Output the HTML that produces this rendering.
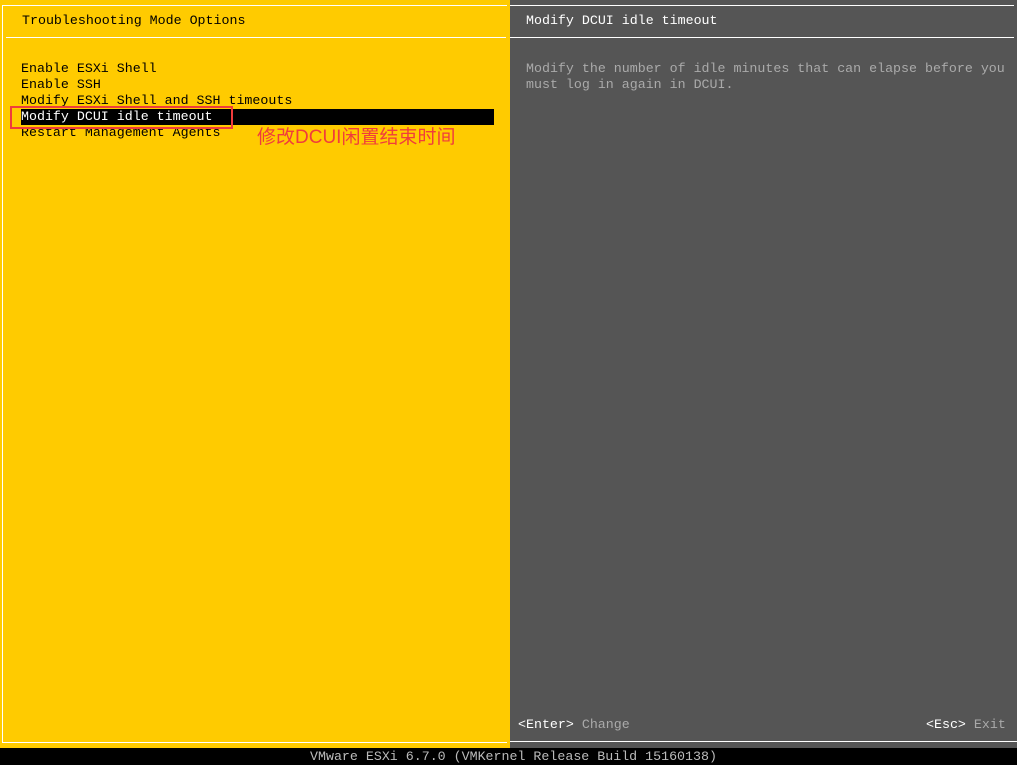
<!DOCTYPE html>
<html><head><meta charset="utf-8"><style>
body{margin:0;width:1017px;height:765px;overflow:hidden;background:#000;font-family:"Liberation Mono",monospace;font-size:13.3px;position:relative}
div{position:absolute;white-space:pre}
.t{line-height:16px}
</style></head><body>
<div style="left:0;top:0;width:510px;height:748px;background:#ffcb00"></div>
<div style="left:510px;top:0;width:507px;height:748px;background:#555"></div>
<div style="left:2px;top:5px;width:504px;height:736px;border:1px solid #fff;border-right:none"></div>
<div style="left:6px;top:37px;width:500px;height:1px;background:#fff"></div>
<div style="left:510px;top:5px;width:504px;height:1px;background:#fff"></div>
<div style="left:510px;top:37px;width:504px;height:1px;background:#fff"></div>
<div style="left:510px;top:741px;width:507px;height:1px;background:#fff"></div>
<div class="t" style="left:22px;top:13px;color:#000">Troubleshooting Mode Options</div>
<div style="left:21px;top:109px;width:473px;height:16px;background:#000"></div>
<div class="t" style="left:21px;top:61px;color:#000">Enable ESXi Shell
Enable SSH
Modify ESXi Shell and SSH timeouts
<span style="color:#fff">Modify DCUI idle timeout</span>
Restart Management Agents</div>
<div style="left:10px;top:106px;width:219px;height:19px;border:2px solid #f03c3c"></div>
<div style="left:257px;top:126px;color:#f03c3c;font-family:'Liberation Sans','Noto Sans CJK SC',sans-serif;font-size:19px;line-height:24px">修改DCUI闲置结束时间</div>
<div class="t" style="left:526px;top:13px;color:#fff">Modify DCUI idle timeout</div>
<div class="t" style="left:526px;top:61px;color:#aaa">Modify the number of idle minutes that can elapse before you
must log in again in DCUI.</div>
<div class="t" style="left:518px;top:717px;color:#fff">&lt;Enter&gt; <span style="color:#aaa">Change</span></div>
<div class="t" style="left:926px;top:717px;color:#fff">&lt;Esc&gt; <span style="color:#aaa">Exit</span></div>
<div class="t" style="left:310px;top:749px;color:#bbb">VMware ESXi 6.7.0 (VMKernel Release Build 15160138)</div>
</body></html>
